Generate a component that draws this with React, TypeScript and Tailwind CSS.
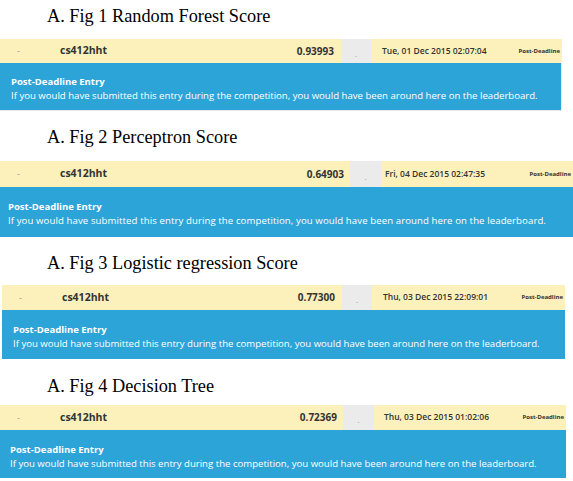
import React from "react"

type RowProps = {
  title: string
  score: string
  date: string
  wrap: string
  yellow: string
  blue: string
  nameCell: string
  scoreCell: string
  grayCell: string
  dateCell: string
  textPad: string
  bodyText: string
}

const Section: React.FC<RowProps> = ({
  title,
  score,
  date,
  wrap,
  yellow,
  blue,
  nameCell,
  scoreCell,
  grayCell,
  dateCell,
  textPad,
  bodyText
}) => {
  return (
    <div className={wrap}>
      <div className="ml-[47px] h-[20px] text-[18.3px] leading-[20px] text-black font-['Liberation_Serif',serif]">
        {title}
      </div>
      <div className={yellow}>
        <div className="w-[60px] pl-[17px] text-[9px] text-[#999]">-</div>
        <div className={nameCell}>cs412hht</div>
        <div className={scoreCell}>{score}</div>
        <div className={grayCell}>.</div>
        <div className={dateCell}>{date}</div>
        <div className="ml-auto pr-[2px] text-[6px] font-bold text-[#333]">Post-Deadline</div>
      </div>
      <div className={blue}>
        <div className={textPad}>
          <div className="text-[9.5px] leading-[14px] font-bold">Post-Deadline Entry</div>
          <div className={bodyText}>
            If you would have submitted this entry during the competition, you would have been around here on the leaderboard.
          </div>
        </div>
      </div>
    </div>
  )
}

export default function App() {
  return (
    <div className="w-[573px] h-[481px] bg-white overflow-hidden font-['Open_Sans',sans-serif]">
      <Section
        title="A. Fig 1 Random Forest Score"
        score="0.93993"
        date="Tue, 01 Dec 2015 02:07:04"
        wrap="pt-[6px] w-[562px]"
        yellow="mt-[13px] h-[24px] flex items-center bg-[#fcf1ba]"
        blue="h-[48px] bg-[#2ca4d8] text-white border-r border-b border-[#e3e9ec]"
        nameCell="w-[195px] text-[10.5px] font-bold text-[#333]"
        scoreCell="w-[79px] text-right text-[10px] font-bold text-[#333]"
        grayCell="ml-[7px] w-[30px] self-stretch flex items-center justify-center bg-[#ebebeb] text-[8px] text-[#999] pt-[5px]"
        dateCell="pl-[11px] text-[8.5px] font-semibold text-[#333]"
        textPad="pt-[12px] pl-[11px]"
        bodyText="text-[9.6px] leading-[14px]"
      />
      <Section
        title="A. Fig 2 Perceptron Score"
        score="0.64903"
        date="Fri, 04 Dec 2015 02:47:35"
        wrap="pt-[16px] w-[573px]"
        yellow="mt-[14px] h-[26px] flex items-center bg-[#fcf1ba]"
        blue="h-[50px] bg-[#2ca4d8] text-white"
        nameCell="w-[195px] text-[10.5px] font-bold text-[#333]"
        scoreCell="w-[89px] text-right text-[10px] font-bold text-[#333]"
        grayCell="ml-[6px] w-[31px] self-stretch flex items-center justify-center bg-[#ebebeb] text-[8px] text-[#999] pt-[5px]"
        dateCell="pl-[4px] text-[8.5px] font-semibold text-[#333]"
        textPad="pt-[13px] pl-[8px]"
        bodyText="text-[9.6px] leading-[14px] tracking-[0.1px]"
      />
      <Section
        title="A. Fig 3 Logistic regression Score"
        score="0.77300"
        date="Thu, 03 Dec 2015 22:09:01"
        wrap="pt-[16px] w-[565px]"
        yellow="mt-[12px] ml-[2px] h-[25px] flex items-center bg-[#fcf1ba]"
        blue="ml-[2px] h-[49px] bg-[#2ca4d8] text-white"
        nameCell="w-[195px] text-[10.5px] font-bold text-[#333]"
        scoreCell="w-[78px] text-right text-[10px] font-bold text-[#333]"
        grayCell="ml-[7px] w-[30px] self-stretch flex items-center justify-center bg-[#ebebeb] text-[8px] text-[#999] pt-[5px]"
        dateCell="pl-[11px] text-[8.5px] font-semibold text-[#333]"
        textPad="pt-[13px] pl-[11px]"
        bodyText="text-[9.6px] leading-[14px]"
      />
      <Section
        title="A. Fig 4 Decision Tree"
        score="0.72369"
        date="Thu, 03 Dec 2015 01:02:06"
        wrap="pt-[17px] w-[566px]"
        yellow="mt-[9px] h-[25px] flex items-center bg-[#fcf1ba]"
        blue="h-[48px] bg-[#2ca4d8] text-white"
        nameCell="w-[195px] text-[10.5px] font-bold text-[#333]"
        scoreCell="w-[82px] text-right text-[10px] font-bold text-[#333]"
        grayCell="ml-[6px] w-[31px] self-stretch flex items-center justify-center bg-[#ebebeb] text-[8px] text-[#999] pt-[5px]"
        dateCell="pl-[10px] text-[8.5px] font-semibold text-[#333]"
        textPad="pt-[13px] pl-[10px]"
        bodyText="text-[9.6px] leading-[14px]"
      />
    </div>
  )
}
